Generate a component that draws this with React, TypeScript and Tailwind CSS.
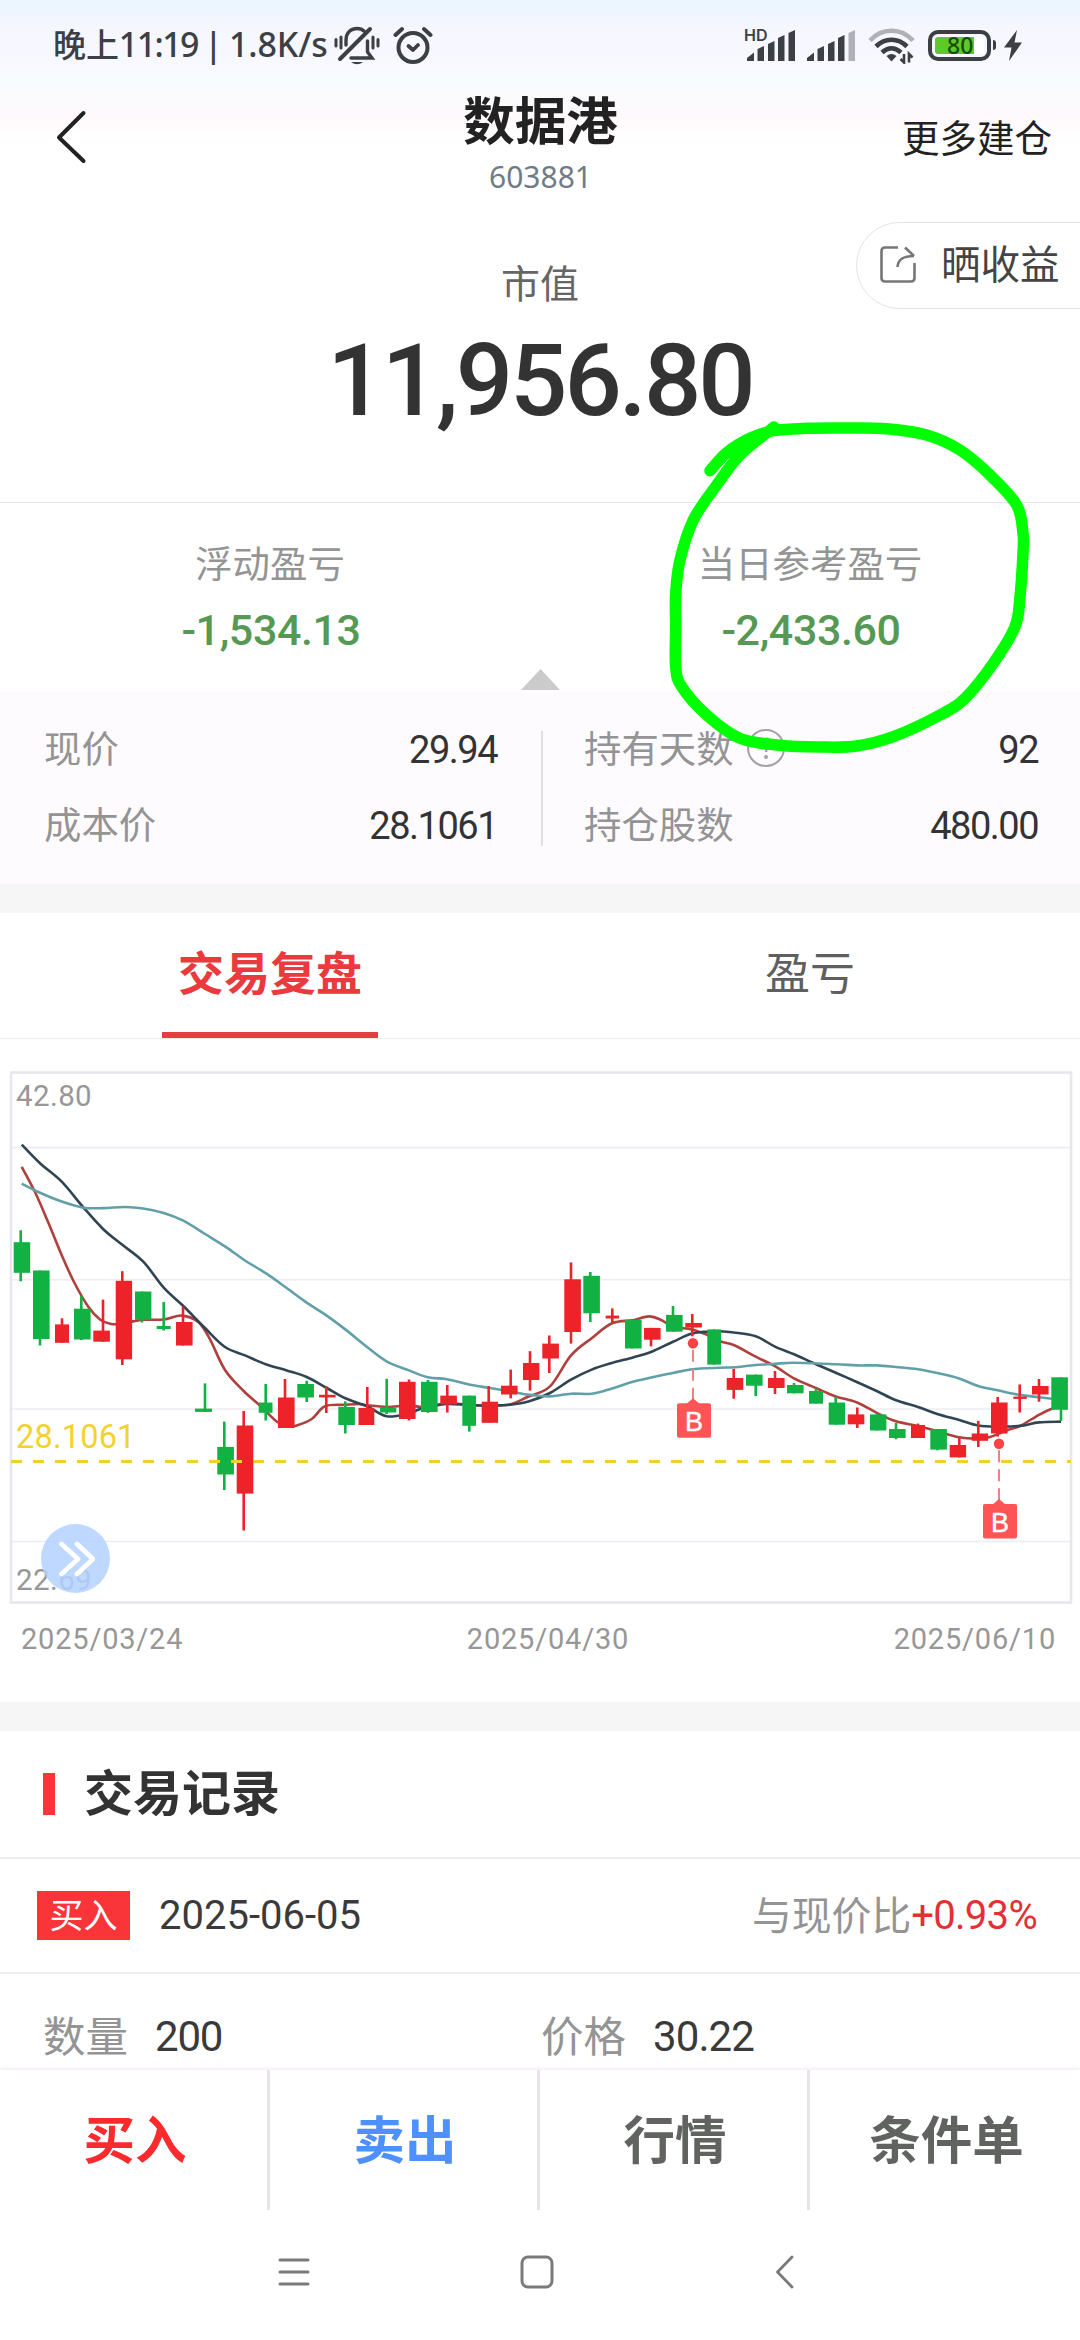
import { clsx } from "clsx";

type Point = [number, number];
// x, width, body top, body bottom, wick x, high, low, direction
type Candle = [number, number, number, number, number, number, number, "up" | "down"];

const CANDLES: Candle[] = [
  [13.7, 16.5, 182.2, 212.8, 20.7, 170.3, 221.2, "down"],
  [33, 16.6, 210.5, 279, 40, 210.5, 285.5, "down"],
  [55, 14, 264.4, 282.8, 62, 258.3, 282.8, "up"],
  [74, 16.6, 248.7, 279.5, 81.3, 236, 280, "down"],
  [93.3, 16.6, 270.6, 281.7, 103, 239.6, 281.7, "up"],
  [115.7, 16.4, 220.8, 299.3, 122.3, 211.2, 305, "up"],
  [135, 16.4, 231.5, 259.8, 142, 231.5, 262.5, "down"],
  [156.7, 14, 266, 269, 163.7, 241.9, 270.5, "down"],
  [176, 16.6, 262, 285.5, 183, 246.8, 285.5, "up"],
  [195, 17, 348.6, 351.9, 205, 323.4, 351.9, "down"],
  [217.3, 16.6, 386.9, 414.5, 224.3, 361.6, 430, "down"],
  [236.7, 16.6, 365.5, 433.6, 243.7, 351, 470.5, "up"],
  [258.7, 13.8, 342.5, 352.8, 265.7, 324, 360.5, "down"],
  [278, 16.6, 337.5, 368, 285, 319, 368, "up"],
  [297.3, 16.6, 324, 337.5, 306.7, 320.7, 342, "down"],
  [319, 16.6, 334.8, 337.4, 326.3, 326.4, 353, "up"],
  [338.3, 16.6, 347, 365, 345.3, 341.4, 373.5, "down"],
  [358.5, 15.8, 347.9, 365, 367.3, 327, 365, "up"],
  [380, 16.3, 347.5, 352.5, 386.7, 318.8, 354, "down"],
  [399, 16.6, 321.8, 359, 409, 319.5, 360.5, "up"],
  [421, 16.6, 321.8, 352, 428, 320, 352.8, "down"],
  [440.3, 16.6, 335.6, 344.4, 447.3, 325, 352.5, "up"],
  [462.3, 13.7, 335.6, 365.8, 469.3, 335.6, 371.6, "down"],
  [481.7, 16.4, 341.7, 362.8, 488.7, 326, 362.8, "up"],
  [501, 16.6, 325.7, 334.5, 510.7, 309.6, 338.3, "up"],
  [523, 16.4, 303, 320, 530, 291.2, 330.6, "up"],
  [542.3, 16.6, 283.6, 298.5, 549.3, 275.5, 313, "up"],
  [564.3, 16.6, 219.3, 272, 571, 202.4, 283.6, "up"],
  [583.3, 16.6, 215.8, 253.3, 590.3, 212, 262, "down"],
  [605.7, 13.4, 255.6, 258.5, 612.3, 248.4, 264, "up"],
  [625, 16.6, 259.8, 288.5, 632, 259.8, 288.5, "down"],
  [644, 16.6, 267.9, 279.7, 651, 267.9, 286.4, "up"],
  [666, 16.6, 254.9, 271.7, 673, 246, 271.7, "down"],
  [685.3, 16.6, 263, 267.5, 692.3, 254, 276.3, "up"],
  [707.3, 13.8, 269.4, 304.6, 714, 269.4, 304.6, "down"],
  [726.7, 16.6, 318, 329.9, 733.7, 308.8, 338.7, "up"],
  [746, 16.6, 314.6, 325.7, 755.7, 314.6, 336, "down"],
  [768, 16.6, 318, 328, 775, 311, 334, "up"],
  [787, 16.6, 325, 333.3, 794, 323, 333.3, "down"],
  [809, 14, 331, 343.7, 816, 328.4, 343.7, "down"],
  [828.7, 16.4, 342.5, 364.7, 835.7, 337, 364.7, "down"],
  [847.7, 16.6, 354.4, 364.3, 857.3, 347.5, 368, "up"],
  [870, 16.4, 354.4, 370.5, 877, 354.4, 370.5, "down"],
  [889, 16.6, 369, 378, 896, 363, 379.3, "down"],
  [911, 14, 365, 378, 918, 363.6, 378, "up"],
  [930.3, 16.6, 369, 389.6, 937.3, 369, 390.3, "down"],
  [949.7, 16.4, 385, 397.4, 959.3, 378, 397.4, "up"],
  [971.7, 16.4, 373.5, 380.8, 978.3, 360.9, 387, "up"],
  [991, 16.6, 342.5, 373.5, 997.7, 337, 376.6, "up"],
  [1013.3, 13.5, 336.6, 338.9, 1019.7, 324.5, 352.5, "up"],
  [1032, 16.6, 326, 334.5, 1039, 319, 341.7, "up"],
  [1051.3, 16.6, 317.3, 349.8, 1061, 317.3, 360.9, "down"],
];

const MA_SHORT: Point[] = [
  [21.7, 106.8], [35, 132], [48.3, 162.6], [61.7, 195.2], [74, 222], [88.3, 246.8], [100, 259.5], [110, 263.7],
  [122, 264], [133, 261.4], [143.3, 259.8], [163.7, 259.5], [181.7, 255.6], [198.3, 262.1], [210, 279.4],
  [225, 310], [243.7, 331], [260, 345.6], [276.7, 361.6], [286.7, 366.6], [296.7, 365.5], [311.7, 359],
  [325, 346.3], [345, 344.8], [360, 344], [367, 345.2], [387, 347], [409, 345.6], [428, 347.5], [447, 343.3],
  [469, 344.8], [490, 345.6], [510, 344.4], [528, 336.8], [550, 326.4], [571, 295.4], [591.7, 278.2],
  [612, 263.3], [633, 260.2], [649, 256.4], [661.7, 260.2], [673, 266.7], [692, 269.4], [707, 274.8],
  [720, 281.3], [733.7, 285], [755.7, 296.6], [775, 306.2], [794, 318.4], [816, 328], [835.7, 336.4],
  [857, 342.5], [876.7, 352.8], [896, 361.3], [918, 365.9], [937, 371.2], [959, 377.3], [978, 378.5],
  [990, 377], [1007.7, 370], [1019.7, 366.2], [1039, 354.8], [1053, 348.3], [1061, 346.3],
];

const MA_MID: Point[] = [
  [21.7, 84.6], [40, 103.3], [61.7, 121.7], [83.3, 147.3], [103.3, 169.2], [122.3, 184.8], [143.3, 201.7],
  [163.7, 227.7], [183.3, 246], [205, 268], [225, 287], [245, 295.4], [265.7, 304.2], [286.7, 310.4],
  [306.7, 317], [326.7, 328], [345.3, 338.3], [367, 346.3], [386.7, 356.3], [409, 353], [428, 346.3],
  [447, 344], [469, 345], [490, 345.6], [510, 344.8], [530, 341], [550, 333], [571, 319.6], [591.7, 309.6],
  [612, 303], [633, 297.4], [651, 292], [673, 281.7], [692, 273.6], [707, 271.7], [720, 271.3], [733.7, 272.5],
  [755.7, 276.3], [775, 286.6], [794, 294.3], [816, 304.2], [835.7, 312.7], [857.3, 322.2], [876.7, 331],
  [896, 340.2], [918, 347], [937.3, 354], [959.3, 360], [978.3, 365.5], [997.7, 366.6], [1019.7, 365.9],
  [1039, 362.4], [1061, 361.6],
];

const MA_LONG: Point[] = [
  [21.7, 123.6], [40, 132.8], [61.7, 141.6], [83.3, 147.7], [103.3, 148.1], [125, 147], [143.3, 148.5],
  [163.7, 153], [183.3, 160.7], [205, 174], [225, 186.4], [245, 200.5], [265.7, 213.2], [286.7, 228],
  [306.7, 242.6], [326.7, 255.6], [345.3, 269.4], [367, 287], [387, 301.6], [409, 310.4], [428, 317.3],
  [447, 319.2], [469, 324.5], [490, 328], [510, 331.4], [530, 334.9], [550, 336.4], [571, 333.7],
  [591.7, 333.7], [612, 328.4], [633, 321.8], [651, 317.6], [673, 313], [692, 309.2], [720, 307.7],
  [733.7, 307.3], [755.7, 305], [775, 303.9], [794, 302.7], [835.7, 304.2], [857, 305.4], [877, 305.4],
  [896, 307], [918, 309.2], [937, 313], [959, 318.4], [978, 326], [997.7, 330.3], [1019.7, 334.9],
  [1039, 337.2], [1061, 340],
];

const SCRIBBLE: Point[] = [
  [710, 470.7], [726.7, 452.7], [750, 438.3], [773.3, 430.7], [806.7, 428.3], [846.7, 428], [886.7, 428.7],
  [926.7, 435], [960, 450], [990, 475], [1016.7, 505], [1023, 533.3], [1023, 553.3], [1020, 596.7],
  [1015, 626.7], [993.3, 663.3], [965, 698.3], [940, 715], [893.3, 736.7], [856.7, 746], [820, 747],
  [780, 745.3], [740, 738.3], [706.7, 715], [681.7, 686.7], [675.7, 666.7], [675.7, 626.7], [675.7, 593.3],
  [680, 560], [693.3, 520], [716.7, 485], [740, 455], [774, 427],
];

const BUYS = [
  { x: 693, dot: 283.2, top: 343.3 },
  { x: 999, dot: 383.8, top: 444 },
];

// Catmull-Rom spline through the points
function smooth(pts: Point[]) {
  let d = `M${pts[0][0]} ${pts[0][1]}`;
  for (let i = 0; i < pts.length - 1; i++) {
    const p0 = pts[i - 1] ?? pts[i];
    const p1 = pts[i];
    const p2 = pts[i + 1];
    const p3 = pts[i + 2] ?? p2;
    d += ` C${p1[0] + (p2[0] - p0[0]) / 6} ${p1[1] + (p2[1] - p0[1]) / 6} ${p2[0] - (p3[0] - p1[0]) / 6} ${p2[1] - (p3[1] - p1[1]) / 6} ${p2[0]} ${p2[1]}`;
  }
  return d;
}

function SignalBars({ weak }: { weak?: boolean }) {
  return (
    <svg width="49" height="31" viewBox="0 0 49 31" fill="#3c3f44">
      <path d="M0 31V28L7 22.5V31Z" />
      <path d="M10.5 31V19L17 16V31Z" />
      <path d="M21 31V14L27.5 11V31Z" />
      <path d="M31 31V8L37.5 5V31Z" />
      <path d="M41.5 31V3L48 0V31Z" fill={weak ? "#b0b0b8" : "#3c3f44"} />
    </svg>
  );
}

function StatusBar() {
  return (
    <div className="flex h-[90px] items-center justify-between pl-[53px] pr-[58px] text-[#3c3f44]">
      <div className="flex items-center">
        <span className="w-[281px] whitespace-nowrap pb-[2px] font-['Noto_Sans','Noto_Sans_CJK_SC',sans-serif] text-[34px] font-medium tracking-[-0.1px] [word-spacing:-2.5px]">
          <span className="text-[33px]">晚上</span>
          <span className="tracking-[-1.6px]">11:19</span> | 1.8K/s
        </span>
        <svg width="46" height="40" viewBox="0 0 46 40" fill="none" stroke="#3c3f44" strokeWidth="3.4" strokeLinecap="round">
          <path d="M2 14.500V21M7 12V23M39 12V23M44 14.500V21" strokeWidth="3" />
          <path d="M6 34L36 4" strokeWidth="4" />
          <path d="M12 20V15C12 8 16.500 3.500 23 3.500C26 3.500 28 4 30 6" />
          <path d="M17 33H38L33.500 27V16" />
          <path d="M17 37H29Q23 41.500 17 37Z" fill="#3c3f44" stroke="none" />
        </svg>
        <svg className="ml-[13px]" width="40" height="38" viewBox="0 0 40 38" fill="none" stroke="#3c3f44" strokeLinecap="round" strokeLinejoin="round">
          <circle cx="20" cy="21.500" r="14.500" strokeWidth="4" />
          <path d="M2.500 9L9 3M37.500 9L31 3" strokeWidth="4" />
          <path d="M15.500 20L20 24L25 19" strokeWidth="3.800" />
        </svg>
      </div>
      <div className="flex items-center">
        <div className="relative mr-[11px] flex pl-[2px]">
          <SignalBars />
          <span className="absolute left-[-1px] top-[-3px] font-[Inter,sans-serif] text-[16px] font-semibold leading-none">HD</span>
        </div>
        <SignalBars weak />
        <svg className="ml-[12px]" width="48" height="38" viewBox="0 0 48 38" fill="none" stroke="#3c3f44" strokeWidth="4.600">
          <path d="M2 14.500C14 1.500 33 1.500 45 14.500" stroke="#b0b0b8" />
          <path d="M8 20.500C17 11.500 30 11.500 39 20.500" />
          <path d="M14 26.500C20 21 27 21 33 26.500" />
          <path d="M18.500 30Q23.500 26 28.500 30L23.500 35.500Z" fill="#3c3f44" stroke="none" />
          <path d="M36 28V36.500L32.500 33M41 36.500V28L44.500 31.500" strokeWidth="2.600" />
        </svg>
        <div className="ml-[12px] flex h-[31px] w-[63px] items-center justify-center rounded-[10px] border-4 border-[#3c3f44] px-[3px]">
          <div className="relative h-[17px] w-full rounded-[3px] bg-gradient-to-r from-[#5fc927] from-[80%] to-white to-[80%]">
            <span className="absolute left-[12px] top-[-2px] font-['Noto_Sans',sans-serif] text-[23px] font-medium leading-[21px] text-[#1c4a0c]">80</span>
          </div>
        </div>
        <div className="ml-[2px] h-[10px] w-[3px] rounded-r bg-[#3c3f44]" />
        <svg className="ml-[8px]" width="18" height="31" viewBox="0 0 18 31" fill="#3c3f44">
          <path d="M13 0L0 17.500H7.500L5 31L18 12.500H10.500Z" />
        </svg>
      </div>
    </div>
  );
}

function Header() {
  return (
    <div className="grid h-[112px] grid-cols-3 items-start pl-[55px] pr-[28px]">
      <svg className="mt-[20px]" width="32" height="54" viewBox="0 0 32 54" fill="none" stroke="#222" strokeWidth="4" strokeLinecap="round" strokeLinejoin="round">
        <path d="M28.500 3L4 27.500L28.500 51" />
      </svg>
      <div className="-ml-[26px] flex flex-col items-center">
        <h1 className="-mt-[3px] text-[51.500px] font-bold leading-[62px] text-[#222]">数据港</h1>
        <span className="mt-[10px] font-['Noto_Sans',sans-serif] text-[30px] leading-[36px] text-[#707b87]">603881</span>
      </div>
      <span className="mt-[23px] justify-self-end text-[37.500px] leading-[46px] text-[#222]">更多建仓</span>
    </div>
  );
}

function Metric({ label, value }: { label: string; value: string }) {
  return (
    <div className="flex flex-1 flex-col items-center pt-[34px]">
      <span className="text-[37.400px] leading-[50px] text-[#949494]">{label}</span>
      <span className="mt-[18px] pl-[2px] font-[Roboto,sans-serif] text-[43px] font-medium leading-[50px] tracking-[-0.4px] text-[#569955]">{value}</span>
    </div>
  );
}

function DetailRow({ label, value, help }: { label: string; value: string; help?: boolean }) {
  return (
    <div className="flex h-[76px] items-center justify-between">
      <span className="flex items-center pb-[5px] text-[37.400px] text-[#949494]">
        {label}
        {help && (
          <svg className="ml-[12px] mt-[4px]" width="40" height="40" viewBox="0 0 40 40" fill="none" stroke="#a3a1a3" strokeWidth="2">
            <circle cx="20" cy="19" r="18" />
            <path d="M15 15C15 8 25 8 25 14.500C25 18 20 18 20 23" strokeWidth="2.500" />
            <circle cx="20" cy="28" r="1" />
          </svg>
        )}
      </span>
      <span className="font-[Roboto,sans-serif] text-[38px] tracking-[-1.5px] text-[#333]">{value}</span>
    </div>
  );
}

function KLineChart() {
  return (
    <div className="relative h-[562px]">
      <svg className="block font-[Roboto,sans-serif]" width="1080" height="562" viewBox="0 0 1080 562">
        <rect x="11" y="12.500" width="1060" height="530" fill="none" stroke="#e6e6ec" strokeWidth="2.500" />
        {[87.600, 219.700, 349, 481.500].map((y) => (
          <path key={y} d={`M12 ${y}H1070`} stroke="#ececf3" strokeWidth="1.600" />
        ))}
        <g fill="#979797" fontSize="29.500" letterSpacing="0.4">
          <text x="16" y="46">42.80</text>
          <text x="16" y="529.500">22.69</text>
        </g>
        <text x="16" y="388" fontSize="32.500" letterSpacing="0.2" fill="#f3d22d">28.1061</text>
        <g fill="none" strokeWidth="2.600">
          <path d={smooth(MA_SHORT)} stroke="#b0403c" />
          <path d={smooth(MA_MID)} stroke="#2f4554" />
          <path d={smooth(MA_LONG)} stroke="#61a0a8" />
        </g>
        {CANDLES.map(([x, w, top, bottom, wick, high, low, dir]) => (
          <g key={x} fill={dir === "up" ? "#ee232a" : "#12b144"}>
            <rect x={wick - 1.300} y={high} width="2.600" height={low - high} />
            <rect x={x} y={top} width={w} height={bottom - top} />
          </g>
        ))}
        <path d="M11 401.500H1071" stroke="#efd02f" strokeWidth="2.800" strokeDasharray="11 11" />
        {BUYS.map(({ x, dot, top }) => (
          <g key={x} fill="#ff5456">
            <circle cx={x} cy={dot} r="5.200" fill="#fb4343" />
            <path d={`M${x} ${dot + 6.500}V${top - 3}`} stroke="#ea8484" strokeWidth="2" strokeDasharray="12 7" />
            <path d={`M${x - 7} ${top + 1}L${x} ${top - 5}L${x + 7} ${top + 1}Z`} />
            <rect x={x - 16} y={top} width="34" height="34.500" rx="2" />
            <text x={x + 1} y={top + 27.500} textAnchor="middle" fontFamily="Liberation Sans" fontSize="27" fill="#fff" stroke="#fff" strokeWidth="0.500">B</text>
          </g>
        ))}
      </svg>
      <button className="absolute left-[41px] top-[464px] flex size-[69px] items-center justify-center rounded-full bg-[#b4d1ff]/85">
        <svg width="38" height="36" viewBox="0 0 38 36" fill="none" stroke="#fff" strokeWidth="4.800" strokeLinecap="round" strokeLinejoin="round">
          <path d="M4.500 3L21 18L4.500 33M20 3L36 18L20 33" />
        </svg>
      </button>
    </div>
  );
}

const ACTIONS = [
  { label: "买入", color: "text-[#fa2a2d]" },
  { label: "卖出", color: "text-[#4d90fe]" },
  { label: "行情", color: "text-[#616361]" },
  { label: "条件单", color: "text-[#616361]" },
];

export default function App() {
  return (
    <div className="relative flex h-[2340px] w-[1080px] flex-col overflow-hidden bg-white font-['Noto_Sans_CJK_SC',sans-serif]">
      <div className="bg-[linear-gradient(#e9f5ff_0px,#f6f6ff_28px,#f8fbff_85px,#fff9fc_118px,#ffffff_140px)]">
        <StatusBar />
        <Header />
      </div>

      <section className="relative flex h-[300px] flex-col items-center pt-[53px]">
        <span className="text-[39px] leading-[52px] text-[#666]">市值</span>
        <span className="mt-[14px] font-[Roboto,sans-serif] text-[101px] font-medium leading-[120px] tracking-[-3px] text-[#333]">
          11,956.80
        </span>
        <button className="absolute right-[-2px] top-[20px] flex h-[87px] w-[226px] items-center rounded-l-full border border-[#e4e4e4] pb-[3px] pl-[23px]">
          <svg width="36" height="37" viewBox="0 0 36 37" fill="none" stroke="#777" strokeWidth="2.600">
            <path d="M18 1.500H5Q1.500 1.500 1.500 5V32Q1.500 35.500 5 35.500H31Q34.500 35.500 34.500 32V17" />
            <path d="M17.500 21C18 14 22 10 34 10M25 1.500L34 10" />
          </svg>
          <span className="-mt-[4px] ml-[25px] text-[39.500px] leading-[50px] text-[#444]">晒收益</span>
        </button>
      </section>

      <section className="relative flex h-[190px] border-t border-[#e8e8e8]">
        <Metric label="浮动盈亏" value="-1,534.13" />
        <Metric label="当日参考盈亏" value="-2,433.60" />
        <svg className="absolute left-[521px] top-[166px]" width="39" height="21" viewBox="0 0 39 21">
          <path d="M19.500 0L39 21H0Z" fill="#cbcbcb" />
        </svg>
      </section>

      <section className="flex h-[192px] items-start bg-[#fefbff] pt-[20px]">
        <div className="w-[541px] pl-[44px] pr-[44px]">
          <DetailRow label="现价" value="29.94" />
          <DetailRow label="成本价" value="28.1061" />
        </div>
        <div className="mt-[19px] h-[115px] w-[2px] bg-[#e0dfe3]" />
        <div className="flex-1 pl-[41px] pr-[42px]">
          <DetailRow label="持有天数" value="92" help />
          <DetailRow label="持仓股数" value="480.00" />
        </div>
      </section>

      <div className="h-[29px] bg-[#f6f6f6]" />

      <nav className="flex h-[126px] justify-around border-b border-[#ececec] text-[46px]">
        <div className="flex w-[216px] items-center justify-center border-b-[6px] border-[#e63d41] pb-[5px] font-bold text-[#e93a3e]">交易复盘</div>
        <div className="flex w-[216px] items-center justify-center pb-[9px] text-[45px] text-[#5f5f5f]">盈亏</div>
      </nav>

      <section className="pt-[21px]">
        <KLineChart />
        <div className="grid h-[80px] grid-cols-3 pl-[21px] pr-[24px] font-[Roboto,sans-serif] text-[29px] leading-[34px] tracking-[0.8px] text-[#979797]">
          <span>2025/03/24</span>
          <span className="pl-[19px] text-center">2025/04/30</span>
          <span className="text-right">2025/06/10</span>
        </div>
      </section>

      <div className="h-[29px] bg-[#f6f6f6]" />

      <section className="text-[#949494]">
        <div className="flex h-[128px] items-center border-b-2 border-[#eee] pl-[43px]">
          <div className="h-[42px] w-[12px] bg-[#fa353a]" />
          <h2 className="ml-[29px] pb-[8px] text-[49px] font-bold text-[#333]">交易记录</h2>
        </div>
        <div className="flex h-[115px] items-center border-b-2 border-[#eee] pl-[37px] pr-[43px]">
          <span className="flex h-[49px] w-[93px] items-center justify-center bg-[#fa353a] pb-[4px] text-[34px] text-white">买入</span>
          <span className="ml-[29px] flex-1 font-[Roboto,sans-serif] text-[40px] text-[#3a3a3a]">2025-06-05</span>
          <span className="pb-[5px] text-[39.800px]">与现价比</span>
          <span className="font-[Roboto,sans-serif] text-[40px] tracking-[-0.7px] text-[#e52f33]">+0.93%</span>
        </div>
        <div className="flex h-[96px] items-center pl-[43px] pt-[29px] text-[42.500px]">
          <div className="flex w-[498px] items-center">
            <span className="pb-[5px]">数量</span>
            <span className="ml-[27px] font-[Roboto,sans-serif] text-[42px] tracking-[-1.2px] text-[#3a3a3a]">200</span>
          </div>
          <span className="pb-[5px]">价格</span>
          <span className="ml-[27px] font-[Roboto,sans-serif] text-[42px] tracking-[-0.9px] text-[#3a3a3a]">30.22</span>
        </div>
      </section>

      <footer className="relative grid h-[140px] grid-cols-4 divide-x-3 divide-[#e5e5e5] bg-white shadow-[0_-2px_3px_#f3eff5]">
        {ACTIONS.map(({ label, color }) => (
          <button key={label} className={clsx("flex items-center justify-center pb-[7px] pl-[3px] text-[51.500px] font-bold", color)}>
            {label}
          </button>
        ))}
      </footer>

      <div className="flex flex-1 items-start pl-[278px] pt-[44px]">
        <svg width="32" height="36" viewBox="0 0 32 36" stroke="#7a7a7a" strokeWidth="3" strokeLinecap="round">
          <path d="M2 6H30M2 18H30M2 30H30" />
        </svg>
        <svg className="ml-[210px]" width="34" height="36" viewBox="0 0 34 36" fill="none" stroke="#7a7a7a" strokeWidth="3">
          <rect x="2" y="3" width="30" height="30" rx="6" />
        </svg>
        <svg className="ml-[220px]" width="22" height="36" viewBox="0 0 22 36" fill="none" stroke="#7a7a7a" strokeWidth="2.800" strokeLinecap="round" strokeLinejoin="round">
          <path d="M18 3L3.500 18L18 33" />
        </svg>
      </div>

      {/* hand-drawn marker */}
      <svg className="pointer-events-none absolute left-0 top-0" width="1080" height="800" viewBox="0 0 1080 800">
        <path d={smooth(SCRIBBLE)} fill="none" stroke="#00ff00" strokeWidth="11.500" strokeLinecap="round" strokeLinejoin="round" />
      </svg>
    </div>
  );
}
